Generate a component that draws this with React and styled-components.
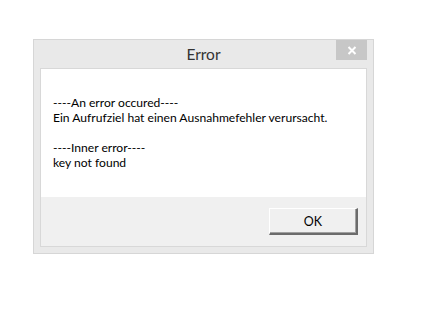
import React from 'react';
import styled, { createGlobalStyle } from 'styled-components';

const GlobalStyle = createGlobalStyle`
    html, body {
        margin: 0;
        padding: 0;
        background: #ffffff;
    }
    body {
        font-family: Lato, "Noto Sans", sans-serif;
    }
`;

const Page = styled.div`
    padding: 39px 0 0 33px;
    width: 438px;
    height: 317px;
    box-sizing: border-box;
`;

const Window = styled.div`
    width: 341px;
    box-sizing: border-box;
    background: #e9e9e9;
    border: 1px solid #d6d6d6;
    padding: 0 6px 6px 6px;
    display: flex;
    flex-direction: column;
`;

const TitleBar = styled.div`
    height: 28px;
    display: grid;
    grid-template-columns: 1fr auto 1fr;
    align-items: start;
`;

const Title = styled.div`
    grid-column: 2;
    align-self: center;
    font-size: 15.5px;
    color: #333333;
    margin-top: -1px;
`;

const CloseButton = styled.button`
    grid-column: 3;
    justify-self: end;
    width: 31px;
    height: 20px;
    margin: 0;
    padding: 0;
    border: none;
    background: #c7c7c7;
    display: flex;
    align-items: center;
    justify-content: center;
`;

const Client = styled.div`
    border: 1px solid #d8d8d8;
    display: flex;
    flex-direction: column;
`;

const Body = styled.div`
    background: #ffffff;
    height: 128px;
    box-sizing: border-box;
    padding: 26px 12px 0 12px;
    font-size: 12.1px;
    line-height: 15px;
    color: #000000;
`;

const Line = styled.div`
    white-space: pre;
    min-height: 15px;
`;

const Footer = styled.div`
    background: #f0f0f0;
    height: 49px;
    box-sizing: border-box;
    padding: 11px 8px 0 0;
    display: flex;
    justify-content: flex-end;
    align-items: flex-start;
`;

const Button = styled.button`
    width: 89px;
    height: 27px;
    box-sizing: border-box;
    margin: 0;
    padding: 0;
    background: #f0f0f0;
    border-style: solid;
    border-width: 1px 2px 2px 1px;
    border-color: #ffffff #6b6b6b #6b6b6b #ffffff;
    box-shadow: inset -1px -1px 0 #a0a0a0;
    font-family: Lato, "Noto Sans", sans-serif;
    font-size: 12.5px;
    color: #000000;
`;

const lines = [
    '----An error occured----',
    'Ein Aufrufziel hat einen Ausnahmefehler verursacht.',
    '',
    '----Inner error----',
    'key not found',
];

const App = () => {
    return (
        <>
            <GlobalStyle />
            <Page>
                <Window>
                    <TitleBar>
                        <Title>Error</Title>
                        <CloseButton aria-label="Close">
                            <svg width="10" height="9" viewBox="0 0 10 9">
                                <path d="M1.5 1 L8.5 8 M8.5 1 L1.5 8" stroke="#ffffff" strokeWidth="2" />
                            </svg>
                        </CloseButton>
                    </TitleBar>
                    <Client>
                        <Body>
                            {lines.map((text, i) => (
                                <Line key={i}>{text}</Line>
                            ))}
                        </Body>
                        <Footer>
                            <Button>OK</Button>
                        </Footer>
                    </Client>
                </Window>
            </Page>
        </>
    );
};

export default App;
